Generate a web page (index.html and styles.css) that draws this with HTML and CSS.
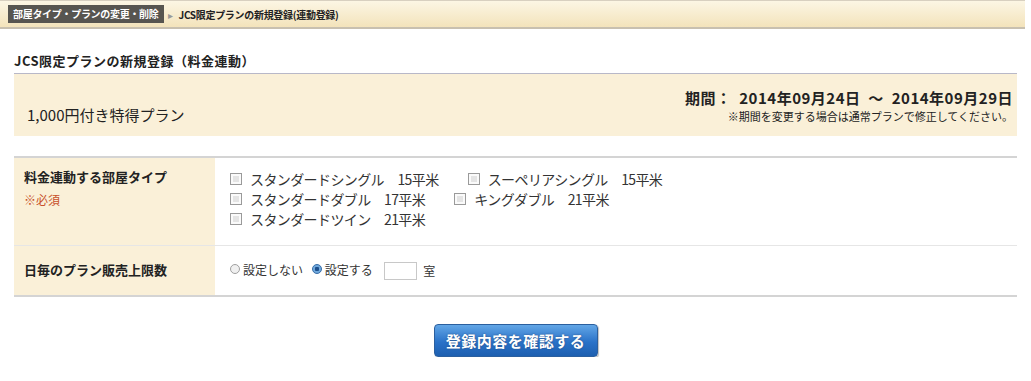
FILE: index.html
```html
<!DOCTYPE html>
<html lang="ja">

<head>
    <meta charset="UTF-8">
    <meta name="viewport" content="width=device-width, initial-scale=1.0">
    <title>JCS限定プランの新規登録</title>
    <link rel="stylesheet" href="styles.css">
</head>

<body>

    <div class="topbar">
        <span class="crumbCurrent">部屋タイプ・プランの変更・削除</span>
        <span class="crumbArrow">&#9656;</span>
        <span class="crumbText">JCS限定プランの新規登録(連動登録)</span>
    </div>

    <div class="main">
        <h2 class="pageTitle">JCS限定プランの新規登録（料金連動）</h2>

        <div class="plan">
            <div class="planName">1,000円付き特得プラン</div>
            <div class="planPeriod">
                <div class="period">期間：&nbsp;&nbsp;2014年09月24日&nbsp;&nbsp;～&nbsp;&nbsp;2014年09月29日</div>
                <div class="periodNote">※期間を変更する場合は通常プランで修正してください。</div>
            </div>
        </div>

        <table class="form">
            <tr>
                <th class="rooms">
                    <div>料金連動する部屋タイプ</div>
                    <div class="required">※必須</div>
                </th>
                <td class="roomList">
                    <div class="roomRow">
                        <label class="room"><input type="checkbox">スタンダードシングル　15平米</label>
                        <label class="room"><input type="checkbox">スーペリアシングル　15平米</label>
                    </div>
                    <div class="roomRow">
                        <label class="room"><input type="checkbox">スタンダードダブル　17平米</label>
                        <label class="room"><input type="checkbox">キングダブル　21平米</label>
                    </div>
                    <div class="roomRow">
                        <label class="room"><input type="checkbox">スタンダードツイン　21平米</label>
                    </div>
                </td>
            </tr>
            <tr>
                <th>日毎のプラン販売上限数</th>
                <td class="limit">
                    <label class="choice"><input type="radio" name="limit">設定しない</label>
                    <label class="choice"><input type="radio" name="limit" checked>設定する</label>
                    <input type="text" class="count">
                    <span class="unitRoom">室</span>
                </td>
            </tr>
        </table>

        <div class="actions">
            <button class="confirm">登録内容を確認する</button>
        </div>
    </div>

</body>

</html>
```

FILE: styles.css
```css
body {
    margin: 0;
    font-family: 'Noto Sans CJK JP', 'Liberation Sans', sans-serif;
    color: #222;
    background: #fff;
}

.topbar {
    height: 29px;
    border-top: 1px solid #d8d0c0;
    border-bottom: 2px solid #c8c0b0;
    background: linear-gradient(#fcf6e4, #f3e3bb);
    display: flex;
    align-items: center;
    padding-left: 8px;
    margin-right: 6px;
    box-sizing: border-box;
    font-size: 10px;
}

.crumbCurrent {
    background: #575550;
    color: #fff;
    font-weight: bold;
    padding: 1px 5px;
    line-height: 16px;
    letter-spacing: -0.3px;
}

.crumbArrow {
    color: #999;
    font-size: 10px;
    margin: 0 6px 0 4px;
}

.crumbText {
    color: #222;
    font-weight: bold;
    letter-spacing: -0.3px;
}

.main {
    padding: 0 14px;
}

.pageTitle {
    margin: 23px 0 0;
    padding: 0 0 3px;
    font-size: 13px;
    line-height: 18px;
    font-weight: bold;
    letter-spacing: 0.5px;
    border-bottom: 1px solid #b8b8c8;
}

.plan {
    height: 62px;
    box-sizing: border-box;
    background: #faf0d8;
    display: flex;
    justify-content: space-between;
    align-items: flex-end;
    padding: 0 4px 11px 13px;
}

.planName {
    font-size: 15px;
    line-height: 20px;
}

.planPeriod {
    text-align: right;
    margin-bottom: 1px;
}

.period {
    font-size: 15px;
    font-weight: bold;
    line-height: 20px;
    letter-spacing: 0.5px;
}

.periodNote {
    font-size: 11px;
    line-height: 16px;
}

.form {
    width: 100%;
    margin-top: 20px;
    border-collapse: collapse;
    border-top: 2px solid #d4d4d4;
    border-bottom: 2px solid #d4d4d4;
}

.form th {
    width: 201px;
    box-sizing: border-box;
    background: #faf0d8;
    text-align: left;
    vertical-align: top;
    font-size: 13px;
    line-height: 18px;
    padding: 10px 10px;
}

.form tr + tr th,
.form tr + tr td {
    border-top: 1px solid #e6e6e6;
    vertical-align: middle;
    height: 49px;
    padding-top: 0;
    padding-bottom: 0;
}

.form td {
    vertical-align: top;
    padding: 0 0 0 15px;
}

.required {
    margin-top: 5px;
    color: #c8502a;
    font-weight: normal;
    font-size: 12px;
}

.roomList {
    padding-top: 11px !important;
    height: 88px;
    box-sizing: border-box;
}

.roomRow {
    font-size: 14px;
    line-height: 20px;
    color: #333;
}

.room {
    display: inline-flex;
    align-items: center;
    margin-right: 26px;
    letter-spacing: -0.6px;
}

.room input {
    appearance: none;
    width: 12px;
    height: 12px;
    margin: 0 8px 0 0;
    border: 1px solid #9a9a9a;
    background: #e4e4e4;
    box-shadow: inset 0 0 0 2px #fafafa;
    box-sizing: border-box;
}

.limit {
    font-size: 12px;
    color: #333;
}

.choice {
    display: inline-flex;
    align-items: center;
    margin-right: 6px;
}

.choice input {
    appearance: none;
    width: 10px;
    height: 10px;
    margin: 0 3px 0 0;
    border-radius: 50%;
    border: 1px solid #a0a0a0;
    background: #f0f0f0;
    box-sizing: border-box;
}

.choice input:checked {
    border-color: #3a6fa8;
    background: radial-gradient(circle, #1c4f8c 0 2px, #6fa8dc 2.5px);
}

.count {
    width: 33px;
    height: 18px;
    box-sizing: border-box;
    border: 1px solid #c8c8c8;
    margin: 0 3px 0 3px;
    vertical-align: middle;
}

.unitRoom {
    vertical-align: middle;
}

.actions {
    text-align: center;
    padding-top: 27px;
}

.confirm {
    width: 164px;
    height: 33px;
    border: 1px solid #2b5f9e;
    border-radius: 4px;
    background: linear-gradient(#62a6e6, #2a72c8 55%, #1d5fb0);
    color: #fff;
    font-family: 'Noto Sans CJK JP', sans-serif;
    font-size: 15px;
    font-weight: bold;
    letter-spacing: 0.5px;
    text-shadow: 0 0 2px #2a4f80;
    box-shadow: 1px 1px 1px rgba(0, 0, 0, 0.25);
    cursor: pointer;
}
```
